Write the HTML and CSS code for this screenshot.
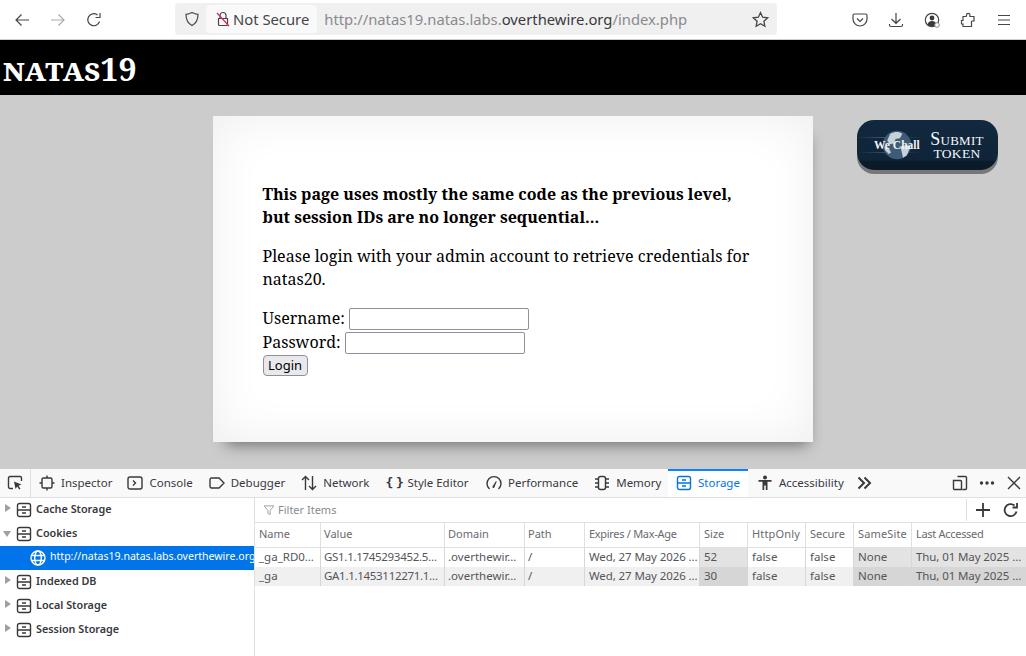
FILE: index.html
```html
<!DOCTYPE html>
<html lang="en">
<head>
<meta charset="utf-8">
<title>natas19</title>
<link rel="stylesheet" href="styles.css">
</head>
<body>
<div class="toolbar">
  <div class="nav">
    <svg class="ico" viewBox="0 0 16 16"><path d="M15 8H2M7.500 2.500L2 8l5.500 5.500"/></svg>
    <svg class="ico dim" viewBox="0 0 16 16"><path d="M1 8h13M8.500 2.500L14 8l-5.500 5.500"/></svg>
    <svg class="ico" viewBox="0 0 16 16"><path d="M13.500 9.500A6 6 0 1 1 11.500 3M14 1v4.500H9.500"/></svg>
  </div>
  <div class="urlbar">
    <svg class="ico shield" viewBox="0 0 16 16"><path d="M8 1.500c2 1.200 3.800 1.700 6 1.800 0 5-1.500 9-6 11.200C3.500 12.300 2 8.300 2 3.300c2.200-.1 4-.6 6-1.800z"/></svg>
    <div class="secure">
      <svg class="ico lock" viewBox="0 0 16 16"><path d="M5 7V4.500a3 3 0 0 1 6 0V7M3.500 7.500h9v6a1 1 0 0 1-1 1h-7a1 1 0 0 1-1-1z"/><path class="slash" d="M2 2l12 13"/></svg>
      <span>Not Secure</span>
    </div>
    <div class="url">http://natas19.natas.labs.<b>overthewire.org</b>/index.php</div>
    <svg class="ico star" viewBox="0 0 16 16"><path d="M8 1.500l2 4.300 4.700.6-3.500 3.200.9 4.700L8 12l-4.100 2.300.9-4.700L1.300 6.400 6 5.800z"/></svg>
  </div>
  <div class="tools">
    <svg class="ico" viewBox="0 0 16 16"><path d="M2.500 2h11A1.500 1.500 0 0 1 15 3.500V7a7 7 0 0 1-14 0V3.500A1.500 1.500 0 0 1 2.500 2z"/><path d="M5 6.500L8 9.500l3-3"/></svg>
    <svg class="ico" viewBox="0 0 16 16"><path d="M8 1v10M3.500 7L8 11.300 12.500 7M1.500 12v1a1.500 1.500 0 0 0 1.500 1.500h10a1.500 1.500 0 0 0 1.500-1.500v-1"/></svg>
    <svg class="ico" viewBox="0 0 16 16"><circle cx="8" cy="8" r="6.700"/><circle class="fill" cx="8" cy="6" r="2.400"/><path class="fill" d="M3.500 12.500c.5-2.500 2.500-3.500 4.500-3.500s4 1 4.500 3.500C11 14.500 5 14.500 3.500 12.500z"/><circle class="badge" cx="13" cy="13" r="2.300"/></svg>
    <svg class="ico" viewBox="0 0 16 16"><path d="M6.500 4.500V3a1.700 1.700 0 0 1 3.400 0v1.500H14V9h-2.500M11.500 9v5.500H3V12H1.500V8.500H3V4.500h3.500"/></svg>
    <svg class="ico" viewBox="0 0 16 16"><path d="M2 3.500h12M2 8h12M2 12.500h12"/></svg>
  </div>
</div>

<main class="page">
  <h1 class="banner"><span class="caps">natas</span>19</h1>
  <a class="token" href="#">
    <span class="chall">
      <svg class="globe" viewBox="0 0 40 40"><circle cx="20" cy="20" r="19" fill="#3f5c76"/><path d="M11 5c6-3 12-3 16 0l-3 6-6 1-2 6-6 1-3-5zM24 22l9-2 5 2-5 12-5 3-2-9zM3 22l6 2 3 6-3 2-5-5z" fill="#c6d1da"/></svg>
      <span class="chall-text">We Chall</span>
    </span>
    <span class="submit"><span class="submit-top">Submit</span><span class="submit-low">Token</span></span>
  </a>
  <section class="card">
    <p class="lead"><b>This page uses mostly the same code as the previous level, but session IDs are no longer sequential...</b></p>
    <p class="para">Please login with your admin account to retrieve credentials for natas20.</p>
    <form class="login">
      <div class="row">Username: <input class="field" type="text"></div>
      <div class="row">Password: <input class="field" type="password"></div>
      <button class="btn" type="button">Login</button>
    </form>
  </section>
</main>

<div class="devtools">
  <div class="tabs">
    <div class="pick"><svg class="dico" viewBox="0 0 16 16"><path d="M6 13.500H3a1.500 1.500 0 0 1-1.500-1.500V3A1.500 1.500 0 0 1 3 1.500h10A1.500 1.500 0 0 1 14.500 3v3"/><path class="fill" d="M7 6.500l7.500 3-3 1.200 2 3-1.300.9-2-3L8.500 14z"/></svg></div>
    <div class="tab tab-ins"><svg class="dico" viewBox="0 0 16 16"><rect x="3" y="3" width="10" height="10" rx="1.500"/><path d="M8 .5V3M8 13v2.500M.5 8H3M13 8h2.500"/></svg>Inspector</div>
    <div class="tab"><svg class="dico" viewBox="0 0 16 16"><rect x="1" y="2" width="14" height="12" rx="2"/><path d="M6 5.500L8.500 8 6 10.500"/></svg>Console</div>
    <div class="tab"><svg class="dico" viewBox="0 0 16 16"><path d="M2.500 3H10l5 5-5 5H2.500A1.500 1.500 0 0 1 1 11.500v-7A1.500 1.500 0 0 1 2.500 3z"/></svg>Debugger</div>
    <div class="tab"><svg class="dico" viewBox="0 0 16 16"><path d="M4.500 15V1.500M1 5l3.500-3.500L8 5M11.500 1v13.500M8 11l3.500 3.500L15 11"/></svg>Network</div>
    <div class="tab"><span class="braces">{ }</span>Style Editor</div>
    <div class="tab tab-perf"><svg class="dico" viewBox="0 0 16 16"><path d="M3.500 14A7 7 0 1 1 12.500 14"/><path class="fill" d="M6.500 11.500L10 6l.7.4-2.400 6a1 1 0 0 1-1.800-.9z"/></svg>Performance</div>
    <div class="tab tab-mem"><svg class="dico" viewBox="0 0 16 16"><rect x="4.500" y="1.500" width="7" height="13" rx="2"/><path d="M1 4h3M1 8h3M1 12h3M12 4h3M12 8h3M12 12h3"/></svg>Memory</div>
    <div class="tab active"><svg class="dico" viewBox="0 0 16 16"><rect x="1.500" y="1.500" width="13" height="13" rx="2"/><path d="M1.500 8h13M6 5h4M6 11h4"/></svg>Storage</div>
    <div class="tab tab-a11y"><svg class="dico" viewBox="0 0 16 16"><circle class="fill" cx="8" cy="2.500" r="2"/><path class="fill" d="M1.500 5h13v1.800H10.500V15H8.800v-4.500H7.200V15H5.500V6.800H1.500z"/></svg>Accessibility</div>
    <svg class="dico more" viewBox="0 0 16 16"><path d="M2.500 2.500L8 8l-5.500 5.500M8.500 2.500L14 8l-5.500 5.500"/></svg>
    <div class="tab-end">
      <svg class="dico" viewBox="0 0 16 16"><path d="M5.500 1.500h8a1 1 0 0 1 1 1v11a1 1 0 0 1-1 1h-3M1.500 5.500h7a1 1 0 0 1 1 1v8h-7a1 1 0 0 1-1-1z"/></svg>
      <svg class="dico dots" viewBox="0 0 16 16"><circle cx="2.500" cy="8" r="1.700"/><circle cx="8" cy="8" r="1.700"/><circle cx="13.500" cy="8" r="1.700"/></svg>
      <svg class="dico" viewBox="0 0 16 16"><path d="M2 2l12 12M14 2L2 14"/></svg>
    </div>
  </div>
  <div class="panes">
    <aside class="tree">
      <div class="node"><i class="tri"></i><svg class="dico" viewBox="0 0 16 16"><rect x="1.500" y="1.500" width="13" height="13" rx="2"/><path d="M1.500 8h13M6 5h4M6 11h4"/></svg>Cache Storage</div>
      <div class="node"><i class="tri open"></i><svg class="dico" viewBox="0 0 16 16"><rect x="1.500" y="1.500" width="13" height="13" rx="2"/><path d="M1.500 8h13M6 5h4M6 11h4"/></svg>Cookies</div>
      <div class="node sel"><svg class="dico" viewBox="0 0 16 16"><circle cx="8" cy="8" r="7"/><ellipse cx="8" cy="8" rx="3.300" ry="7"/><path d="M1.500 5.500h13M1.500 10.500h13"/></svg><span>http://natas19.natas.labs.overthewire.org</span></div>
      <div class="node"><i class="tri"></i><svg class="dico" viewBox="0 0 16 16"><rect x="1.500" y="1.500" width="13" height="13" rx="2"/><path d="M1.500 8h13M6 5h4M6 11h4"/></svg>Indexed DB</div>
      <div class="node"><i class="tri"></i><svg class="dico" viewBox="0 0 16 16"><rect x="1.500" y="1.500" width="13" height="13" rx="2"/><path d="M1.500 8h13M6 5h4M6 11h4"/></svg>Local Storage</div>
      <div class="node"><i class="tri"></i><svg class="dico" viewBox="0 0 16 16"><rect x="1.500" y="1.500" width="13" height="13" rx="2"/><path d="M1.500 8h13M6 5h4M6 11h4"/></svg>Session Storage</div>
    </aside>
    <div class="store">
      <div class="filter">
        <svg class="funnel" viewBox="0 0 16 16"><path d="M1.500 2.500h13L9.500 8.500V14l-3-1.500v-4z"/></svg>
        <span class="hint">Filter Items</span>
        <div class="filter-end">
          <svg class="dico big" viewBox="0 0 16 16"><path d="M8 1v14M1 8h14"/></svg>
          <svg class="dico big" viewBox="0 0 16 16"><path d="M13.500 9.500A6 6 0 1 1 11.500 3.500M14 1v4.500H9.500"/></svg>
        </div>
      </div>
      <div class="grid">
        <div class="th">Name</div><div class="th">Value</div><div class="th">Domain</div><div class="th">Path</div><div class="th tight">Expires / Max-Age</div><div class="th">Size</div><div class="th loose">HttpOnly</div><div class="th">Secure</div><div class="th loose">SameSite</div><div class="th tight">Last Accessed</div>
        <div class="td">_ga_RD0…</div><div class="td num">GS1.1.1745293452.5…</div><div class="td">.overthewir…</div><div class="td">/</div><div class="td date">Wed, 27 May 2026 …</div><div class="td hot">52</div><div class="td">false</div><div class="td">false</div><div class="td hot">None</div><div class="td hot date">Thu, 01 May 2025 …</div>
        <div class="td alt">_ga</div><div class="td alt num">GA1.1.1453112271.1…</div><div class="td alt">.overthewir…</div><div class="td alt">/</div><div class="td alt date">Wed, 27 May 2026 …</div><div class="td alt hot">30</div><div class="td alt">false</div><div class="td alt">false</div><div class="td alt hot">None</div><div class="td alt hot date">Thu, 01 May 2025 …</div>
      </div>
    </div>
  </div>
</div>
</body>
</html>
```
FILE: styles.css
```css
* { box-sizing: border-box; }
html, body { margin: 0; height: 100%; overflow: hidden; }
body { display: flex; flex-direction: column; width: 1026px; height: 656px; font-family: "Noto Sans", sans-serif; background: #fff; }
svg { flex: none; display: block; }
.ico { width: 16px; height: 16px; fill: none; stroke: #46464b; stroke-width: 1.2; }
.dim { opacity: .45; }

.toolbar { height: 40px; flex: none; display: flex; align-items: center; border-bottom: 1px solid #cfcfcf; background: #fff; }
.nav { display: flex; gap: 20px; padding-left: 14px; width: 175px; }
.urlbar { width: 602px; height: 32px; margin-top: -1px; background: #f0f0f0; border-radius: 4px; display: flex; align-items: center; padding-left: 9px; }
.secure { display: flex; align-items: center; gap: 2px; height: 28px; background: #f9f9f9; border-radius: 4px; margin-left: 6px; padding: 0 8px 0 9px; font-size: 14.800px; color: #46464b; }
.lock .slash { stroke: #e22850; }
.url { margin-left: 7px; font-size: 14.800px; color: #8a8a8f; flex: 1; white-space: nowrap; }
.url b { font-weight: 400; color: #3a3a3e; }
.star { margin-right: 8px; width: 17px; height: 17px; }
.tools { display: flex; gap: 20px; margin-left: 75px; }
.fill { fill: #38383d; stroke: none; }
.badge { fill: #fff; stroke: #888; stroke-width: 1; }

.page { flex: 1; position: relative; background: #ccc; min-height: 0; font-family: "Noto Serif", "DejaVu Serif", serif; }
.banner { margin: 0; height: 55px; background: #000; color: #fff; font-size: 32px; font-weight: 700; padding: 7px 0 0 3px; line-height: 44px; white-space: nowrap; }
.caps { font-variant: small-caps; font-size: 32px; letter-spacing: 0; }
.token { position: absolute; left: 857px; top: 80px; width: 141px; height: 50px; border-radius: 17px; background: linear-gradient(#11293f, #0f2438 80%, #0a1a28 84%); box-shadow: 0 4px 0 #777; display: flex; color: #f4f7ff; text-decoration: none; }
.chall { position: relative; width: 66px; background: linear-gradient(90deg, transparent, rgba(255,255,255,.22) 40%, transparent) 0 17px / 100% 1px no-repeat, linear-gradient(90deg, transparent, rgba(255,255,255,.18) 40%, transparent) 0 32px / 100% 1px no-repeat; }
.globe { position: absolute; left: 25px; top: 10px; width: 30px; height: 30px; }
.chall-text { position: absolute; left: 17px; top: 19px; font: 700 11.500px "Liberation Serif", serif; white-space: nowrap; color: #f2f2f2; }
.submit { font-family: "Liberation Serif", serif; text-align: center; padding-top: 11px; width: 60px; margin-left: 4px; }
.submit-top { display: block; font-variant: small-caps; font-size: 18px; line-height: 16px; letter-spacing: .3px; }
.submit-low { display: block; text-transform: uppercase; font-size: 13.500px; line-height: 14px; letter-spacing: .3px; }
.card { width: 600px; height: 326px; margin: 21px auto 0; background: #fff; padding: 67px 50px 0 49.500px; box-shadow: inset 0 0 50px rgba(0,0,0,.07), 4px 12px 14px -9px rgba(0,0,0,.45); color: #000; font-size: 16px; line-height: 23px; }
.lead { margin: 0 0 16px; }
.para { margin: 0 0 15px; }
.login { display: flex; flex-direction: column; align-items: flex-start; }
.row { height: 24px; line-height: 24px; display: flex; align-items: center; gap: 4px; }
.field { width: 180px; height: 22px; padding: 0; margin: 2px 0 0; border: 1px solid #8f8f9d; border-radius: 2px; background: #fff; }
.btn { display: block; height: 21px; width: 45px; padding: 0 0 2px; margin-top: 1px; border: 1px solid #8f8f9d; border-radius: 4px; background: #e9e9ed; font: 13px "Noto Sans", sans-serif; color: #000; }

.devtools { height: 188px; flex: none; display: flex; flex-direction: column; border-top: 1px solid #ccc; font-size: 11.500px; color: #38383d; }
.dico { width: 16px; height: 16px; fill: none; stroke: #38383d; stroke-width: 1.400; }
.tabs { height: 29px; flex: none; display: flex; align-items: stretch; border-bottom: 1px solid #e0e0e2; background: #f9f9fa; }
.pick { width: 30px; display: flex; align-items: center; justify-content: center; }
.pick .dico { margin-left: -1px; }
.tab { display: flex; align-items: center; gap: 6px; padding: 0 8px 1px; white-space: nowrap; }
.tab-ins { border-left: 1px solid #e0e0e2; padding-left: 9px; margin-right: -1px; }
.tab-ins .dico { margin-left: -1px; }
.tab-perf { margin-left: 1.500px; }
.tab-mem { margin-right: -1.500px; }
.tab-a11y { margin-left: 1px; }
.tab.active { color: #0074e8; background: #fff; box-shadow: inset 0 2px 0 #0a84ff; }
.active .dico { stroke: #0074e8; }
.braces { font: 700 13px "DejaVu Sans Mono", monospace; width: 16px; flex: none; text-align: center; letter-spacing: -2.500px; color: #38383d; }
.more { align-self: center; margin-left: 4px; stroke-width: 2; }
.tab-end { margin-left: auto; display: flex; align-items: center; gap: 11px; padding-right: 4px; }
.dots { fill: #38383d; stroke: none; }

.panes { flex: 1; display: flex; min-height: 0; }
.tree { width: 255px; flex: none; border-right: 1px solid #e0e0e2; font-size: 10.800px; font-weight: 600; }
.node { height: 24px; display: flex; align-items: center; gap: 4px; padding: 0 0 4px 16px; position: relative; white-space: nowrap; overflow: hidden; }
.node .dico { margin-top: 4px; }
.tri { position: absolute; left: 5px; top: 6px; width: 0; height: 0; border-left: 6px solid #a0a0a3; border-top: 4.500px solid transparent; border-bottom: 4.500px solid transparent; }
.tri.open { left: 3px; top: 9px; border-top: 6px solid #a0a0a3; border-left: 4.500px solid transparent; border-right: 4.500px solid transparent; border-bottom: 0; }
.sel { background: #0074e8; color: #fff; padding-left: 30px; font-size: 10.550px; font-weight: 400; }
.sel .dico { stroke: #fff; }
.store { flex: 1; min-width: 0; display: flex; flex-direction: column; }
.filter { height: 25px; flex: none; display: flex; align-items: center; padding-left: 8px; gap: 3px; border-bottom: 1px solid #e0e0e2; font-size: 11px; }
.funnel { width: 12px; height: 12px; fill: none; stroke: #999; stroke-width: 1.200; }
.hint { color: #8a8a8f; padding-bottom: 2px; }
.filter-end { margin-left: auto; display: flex; gap: 12px; padding: 3px 7px 3px 8px; border-left: 1px solid #e0e0e2; }
.big { stroke-width: 1.800; }
.grid { display: grid; grid-template-columns: 65px 124px 80px 60px 115px 48px 58px 48px 58px 115px; grid-template-rows: 25px 19px 19px; }
.th, .td { padding: 0 0 2px 3px; display: flex; align-items: center; white-space: nowrap; overflow: hidden; border-left: 1px solid #d7d7db; }
.th:first-child, .td:nth-child(10n+1) { border-left: 0; padding-left: 4px; }
.grid > :nth-child(10n+5), .grid > :nth-child(10n+6), .grid > :nth-child(10n+7), .grid > :nth-child(10n+8), .grid > :nth-child(10n+9), .grid > :nth-child(10n+10) { padding-left: 4px; }
.th { border-bottom: 1px solid #e0e0e2; border-left-color: #e0e0e2; color: #6a6a6f; font-size: 11px; padding-bottom: 3px; }
.tight { letter-spacing: -.300px; }
.loose { letter-spacing: .150px; }
.td { background: #fff; color: #55555a; }
.num { letter-spacing: -.300px; }
.date { letter-spacing: -.100px; }
.alt { background: #f0f0f0; }
.hot { background: #e3e3e3; }
.alt.hot { background: #d6d6d6; }
```
